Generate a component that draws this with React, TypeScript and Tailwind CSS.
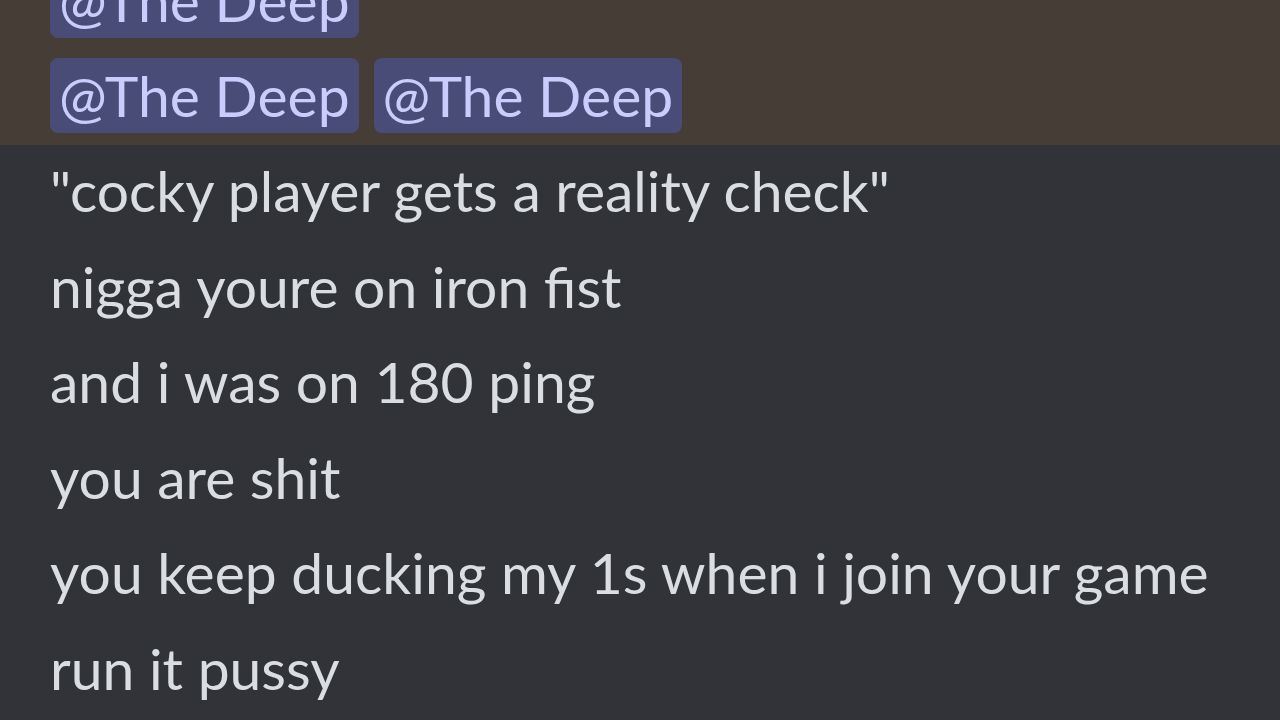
import React from "react";

const Mention = () => (
  <span className="inline-flex items-center h-[75px] px-[9px] rounded-[8px] bg-[#4a4c78] text-[#c9cdfb]">
    @The Deep
  </span>
);

const lines = [
  '"cocky player gets a reality check"',
  "nigga youre on iron fist",
  "and i was on 180 ping",
  "you are shit",
  "you keep ducking my 1s when i join your game",
  "run it pussy",
];

export default function App() {
  return (
    <div
      className="w-[1280px] h-[720px] overflow-hidden bg-[#313338] text-[57px] leading-none whitespace-nowrap"
      style={{ fontFamily: 'Lato, sans-serif' }}
    >
      <div className="bg-[#463d37] pl-[50px] pb-[12px] -mt-[37px] flex flex-col gap-[20px]">
        <div className="flex gap-[15px]">
          <Mention />
        </div>
        <div className="flex gap-[15px]">
          <Mention />
          <Mention />
        </div>
      </div>
      <div className="pl-[50px] -mt-[2px] flex flex-col text-[#dbdee1]">
        {lines.map((l, i) => (
          <div key={i} className="h-[95.5px] flex items-center">
            {l}
          </div>
        ))}
      </div>
    </div>
  );
}
